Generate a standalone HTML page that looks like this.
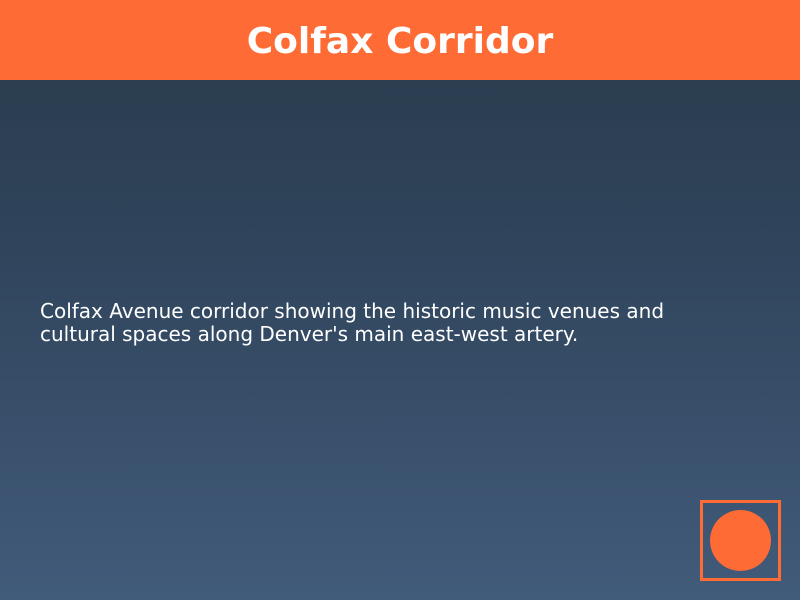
<!DOCTYPE html>
<html><head><style>
html,body{margin:0;padding:0;width:800px;height:600px;overflow:hidden}
body{background:linear-gradient(#2c3e50 80px,#2e4258 200px,#415b7a 600px);font-family:"DejaVu Sans",sans-serif;position:relative}
.h{position:absolute;left:0;top:0;width:800px;height:80px;background:#ff6b35;color:#fff;font-weight:bold;font-size:36px;text-align:center;line-height:84px}
.t{position:absolute;left:40px;top:300px;color:#fff;font-size:20px;line-height:23px;width:720px}
.sq{position:absolute;left:700px;top:500px;width:75px;height:75px;border:3px solid #ff6b35}
.c{position:absolute;left:710px;top:510px;width:61px;height:61px;border-radius:50%;background:#ff6b35}
</style></head><body>
<div class="h">Colfax Corridor</div>
<div class="t">Colfax Avenue corridor showing the historic music venues and<br>cultural spaces along Denver's main east-west artery.</div>
<div class="sq"></div><div class="c"></div>
</body></html>
